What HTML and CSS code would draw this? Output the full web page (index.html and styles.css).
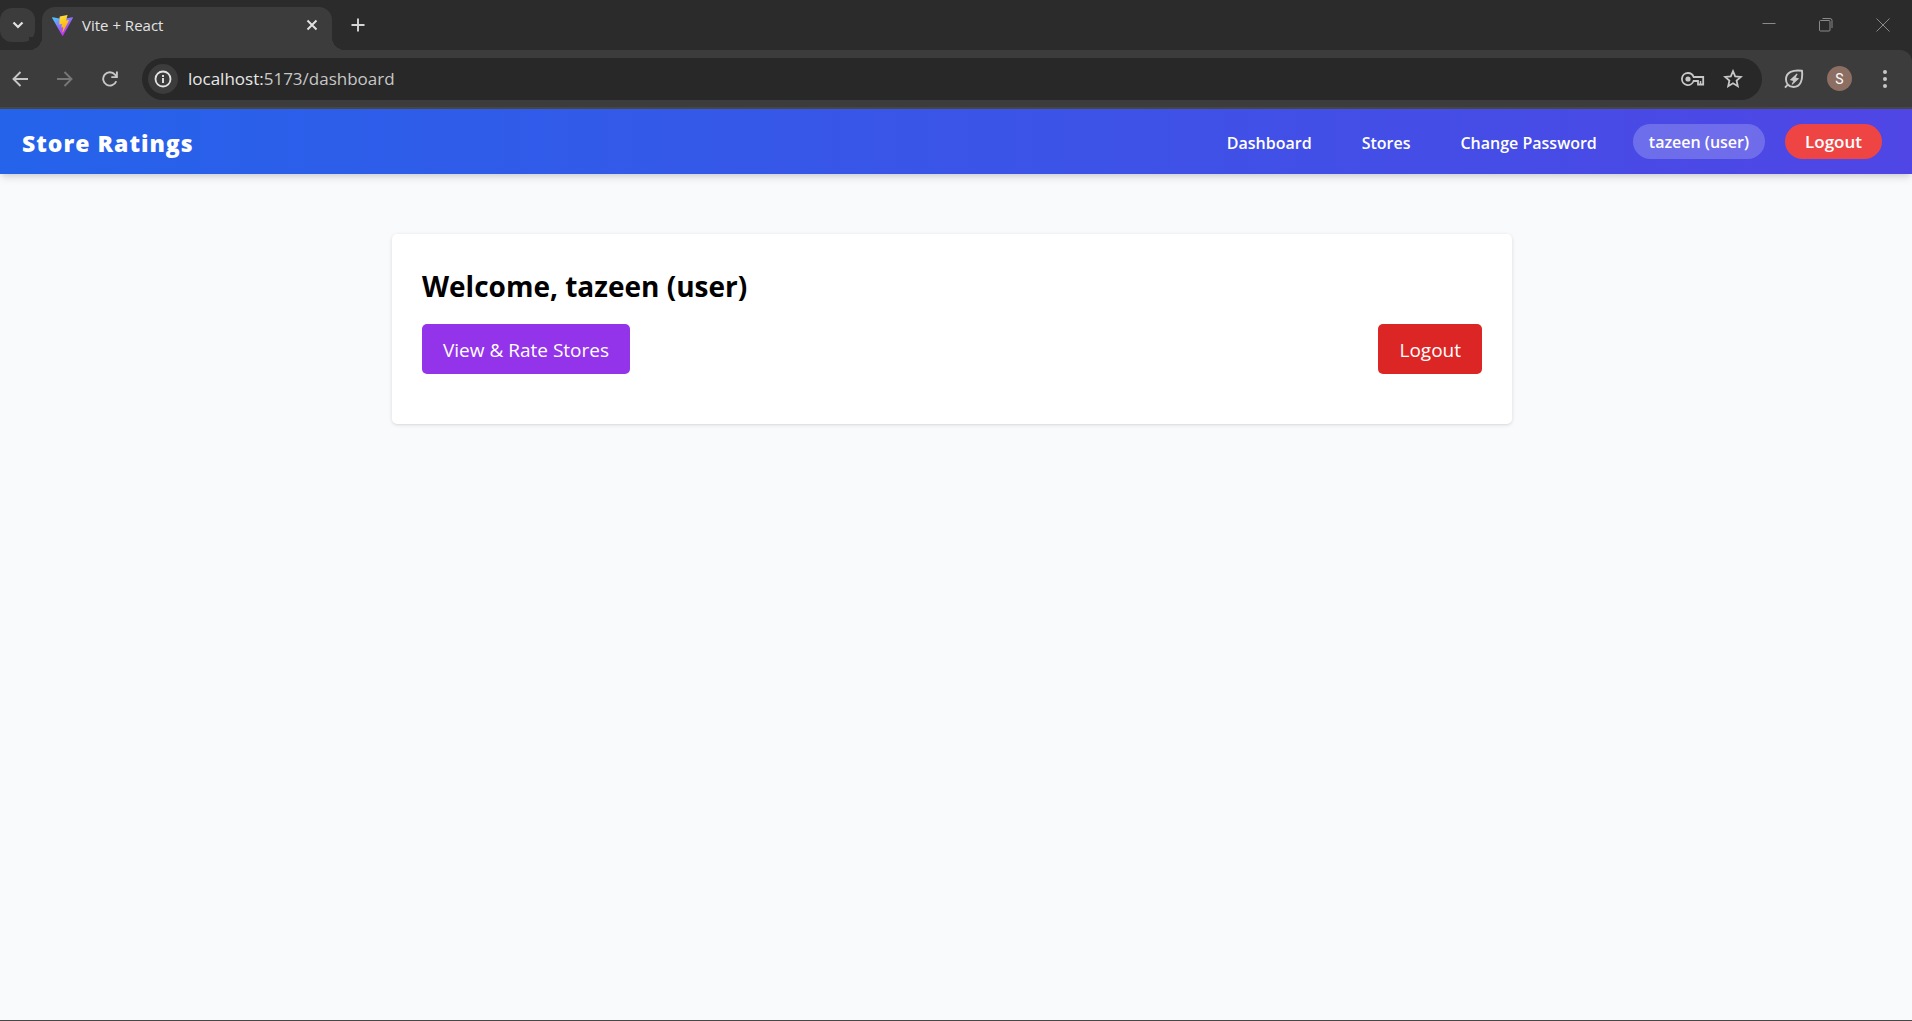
FILE: index.html
```html
<!DOCTYPE html>
<html lang="en">
<head>
<meta charset="utf-8">
<title>Vite + React</title>
<link rel="stylesheet" href="styles.css">
</head>
<body>
<header class="browser">
  <div class="tab-strip">
    <button class="tab-search" aria-label="Search tabs"><svg width="12" height="8" viewBox="0 0 12 8"><path d="M1.500 1.500 6 6l4.500-4.500" fill="none" stroke="currentColor" stroke-width="2.200"/></svg></button>
    <div class="tab">
      <svg class="favicon" width="21" height="21" viewBox="0 0 32 32">
        <defs>
          <linearGradient id="violet" x1="0" y1="0" x2="0.600" y2="0.800"><stop offset="0" stop-color="#41d1ff"/><stop offset="1" stop-color="#bd34fe"/></linearGradient>
          <linearGradient id="amber" x1="0.400" y1="0" x2="0.600" y2="0.900"><stop offset="0" stop-color="#ffea83"/><stop offset="0.080" stop-color="#ffdd35"/><stop offset="1" stop-color="#ffa800"/></linearGradient>
        </defs>
        <path fill="url(#violet)" d="M31.860 4.660 16.900 31.400c-.300.550-1.100.560-1.400 0L.250 4.660c-.340-.600.170-1.320.850-1.200l14.970 2.680h.290l14.660-2.670c.670-.120 1.190.600.840 1.190z"/>
        <path fill="url(#amber)" d="M23.180.010 12.110 2.180a.400.400 0 0 0-.330.380l-.680 11.500c-.020.270.230.480.500.420l3.080-.710c.290-.070.550.190.490.480l-.920 4.480c-.060.300.220.560.510.470l1.900-.580c.300-.090.580.180.520.480l-1.460 7.040c-.090.440.500.680.740.310l.160-.250 9.020-18c.150-.300-.110-.650-.440-.580l-3.170.610c-.300.060-.550-.220-.470-.510l2.070-7.180c.090-.290-.160-.570-.450-.530z"/>
      </svg>
      <span class="tab-title">Vite + React</span>
      <button class="plain" aria-label="Close tab"><svg width="12" height="12" viewBox="0 0 12 12"><path d="m1.500 1.500 9 9m0-9-9 9" stroke="#e3e3e3" stroke-width="1.900"/></svg></button>
    </div>
    <button class="plain new-tab" aria-label="New tab"><svg width="14" height="14" viewBox="0 0 14 14"><path d="M7 .500v13M.500 7h13" stroke="#d5d5d5" stroke-width="1.900"/></svg></button>
    <div class="window-controls">
      <button class="plain" aria-label="Minimize"><svg width="14" height="14" viewBox="0 0 14 14"><path d="M.500 5.500h13" stroke="currentColor"/></svg></button>
      <button class="plain" aria-label="Restore"><svg width="14" height="14" viewBox="0 0 14 14" fill="none" stroke="currentColor"><rect x=".500" y="2.500" width="10.500" height="10.500" rx="1"/><path d="M3.500.500H11a2 2 0 0 1 2 2V10"/></svg></button>
      <button class="plain" aria-label="Close"><svg width="14" height="14" viewBox="0 0 14 14"><path d="m.500.500 13 13m0-13-13 13" stroke="currentColor"/></svg></button>
    </div>
  </div>
  <div class="toolbar">
    <div class="history">
      <button class="plain" aria-label="Back"><svg width="16" height="16" viewBox="0 0 16 16"><path d="M8.500 1 1.500 8l7 7M2 8h14" fill="none" stroke="currentColor" stroke-width="1.900"/></svg></button>
      <button class="plain dim" aria-label="Forward"><svg width="16" height="16" viewBox="0 0 16 16"><path d="m7.500 1 7 7-7 7M14 8H0" fill="none" stroke="currentColor" stroke-width="1.900"/></svg></button>
      <button class="plain" aria-label="Reload"><svg width="16" height="16" viewBox="0 0 16 16"><path d="M14.200 10.200A6.700 6.700 0 1 1 13 3.600L14.800 5.600M14.900.500v5.600H9.300" fill="none" stroke="currentColor" stroke-width="1.900"/></svg></button>
    </div>
    <div class="address-bar">
      <button class="site-info" aria-label="View site information"><svg width="18" height="18" viewBox="0 0 18 18"><circle cx="9" cy="9" r="7.500" fill="none" stroke="currentColor" stroke-width="1.800"/><path d="M9 8v5M9 5v1.900" stroke="currentColor" stroke-width="1.900"/></svg></button>
      <div class="url" role="textbox" aria-label="Address"><span class="host">localhost:</span>5173/dashboard</div>
      <button class="plain" aria-label="Passwords"><svg width="24" height="14" viewBox="0 0 24 14"><path d="M7 1a6 6 0 1 0 5.600 8H17v3.500h5.200V5H12.600A6 6 0 0 0 7 1z" fill="none" stroke="currentColor" stroke-width="1.800"/><circle cx="7" cy="7" r="2.600" fill="currentColor"/><path d="M19.500 9v3" stroke="currentColor" stroke-width="1.500"/></svg></button>
      <button class="plain star" aria-label="Bookmark this tab"><svg width="20" height="20" viewBox="0 0 20 20"><path d="m10 2.200 2.200 5.200 5.600.500-4.200 3.700 1.200 5.600-4.800-2.900-4.800 2.900 1.200-5.600-4.200-3.700 5.600-.500z" fill="none" stroke="currentColor" stroke-width="1.800"/></svg></button>
    </div>
    <div class="tools">
      <button class="plain" aria-label="Energy saver"><svg width="20" height="20" viewBox="0 0 20 20" fill="none" stroke="currentColor" stroke-width="1.900"><path d="M18 1.800C9 .600 2 3.200 2 10.500c0 1.900.600 3.600 1.700 5C5.200 17.200 7.300 18 9.500 18c7 0 9.500-7 8.500-16.200zM4 15.300l-3 3.400"/><path fill="currentColor" stroke="none" d="m12.800 4.600-7 6.400 3.500.900-1.700 3.400.700.500 6.900-6.300-3.500-.900 1.900-3.400z"/></svg></button>
      <button class="avatar" aria-label="Profile">S</button>
      <button class="plain" aria-label="Menu"><svg width="6" height="20" viewBox="0 0 6 20" fill="currentColor"><circle cx="3" cy="3" r="2"/><circle cx="3" cy="10" r="2"/><circle cx="3" cy="17" r="2"/></svg></button>
    </div>
  </div>
</header>
<div class="page">
  <nav class="navbar">
    <a class="brand" href="#">Store Ratings</a>
    <div class="nav-links">
      <a href="#">Dashboard</a>
      <a href="#">Stores</a>
      <a href="#">Change Password</a>
    </div>
    <span class="user-pill">tazeen (user)</span>
    <button class="nav-logout">Logout</button>
  </nav>
  <main class="content">
    <section class="card">
      <h1>Welcome, tazeen (user)</h1>
      <div class="actions">
        <button class="btn btn-purple">View &amp; Rate Stores</button>
        <button class="btn btn-red">Logout</button>
      </div>
    </section>
  </main>
</div>
</body>
</html>
```
FILE: styles.css
```css
* { box-sizing: border-box; }
body {
  margin: 0;
  min-height: 100vh;
  display: flex;
  flex-direction: column;
  font-family: "Open Sans", "Noto Sans", sans-serif;
  background: #f9fafb;
}
button { font: inherit; border: 0; padding: 0; cursor: pointer; }
a { color: inherit; text-decoration: none; }
svg { display: block; flex: none; }

/* Browser frame */
.browser { background: #2b2b2b; color: #c7c7c7; }
.plain { background: none; color: inherit; }
.tab-strip { display: flex; height: 50px; }
.tab-search {
  display: grid;
  place-items: center;
  width: 35px;
  height: 34px;
  margin-top: 8px;
  border-radius: 12px;
  background: #3c3c3c;
  color: #e3e3e3;
}
.tab {
  position: relative;
  display: flex;
  align-items: center;
  width: 290px;
  height: 43px;
  margin: 7px 0 0 7px;
  padding: 0 14px 7px 10px;
  border-radius: 13px 13px 0 0;
  background: #3c3c3c;
}
.tab::before, .tab::after {
  content: "";
  position: absolute;
  bottom: 0;
  width: 13px;
  height: 13px;
}
.tab::before { right: 100%; background: radial-gradient(circle at 0 0, #2b2b2b 13px, #3c3c3c 13px); }
.tab::after { left: 100%; background: radial-gradient(circle at 100% 0, #2b2b2b 13px, #3c3c3c 13px); }
.tab-title { flex: 1; margin-left: 9px; font-size: 15px; line-height: 20px; color: #e3e3e3; }
.new-tab { margin-left: 19px; }
.window-controls { display: flex; gap: 43px; margin-left: auto; padding-right: 22px; color: #8a8a8a; }
.toolbar {
  display: flex;
  align-items: center;
  height: 59px;
  border-bottom: 2px solid #474747;
  border-radius: 0 12px 0 0;
  background: #3c3c3c;
}
.history { display: flex; gap: 29px; padding-left: 12px; }
.dim { color: #777777; }
.address-bar {
  flex: 1;
  display: flex;
  align-items: center;
  height: 42px;
  margin-left: 24px;
  padding: 0 19px 0 6px;
  border-radius: 21px;
  background: #282828;
}
.site-info {
  display: grid;
  place-items: center;
  width: 30px;
  height: 30px;
  border-radius: 50%;
  background: #3c3c3c;
  color: #e3e3e3;
}
.url { flex: 1; margin-left: 10px; font-size: 17px; line-height: 24px; }
.host { color: #e8e8e8; }
.star { margin-left: 18px; }
.tools { display: flex; align-items: center; padding: 0 24px 0 22px; }
.avatar {
  width: 25px;
  height: 25px;
  margin: 0 30px 0 23px;
  border-radius: 50%;
  background: #8d6e63;
  color: #ffffff;
  font-family: Roboto, sans-serif;
  font-size: 14px;
}

/* Application */
.page { flex: 1; border-bottom: 1px solid #474747; }
.navbar {
  display: flex;
  align-items: center;
  height: 65px;
  padding: 0 30px 0 22px;
  background: linear-gradient(90deg, #2563eb, #4f46e5);
  box-shadow: 0 5px 8px -1px rgba(0, 0, 0, 0.1), 0 3px 5px -2px rgba(0, 0, 0, 0.1);
  color: #ffffff;
  font-size: 16px;
  font-weight: 600;
  line-height: 24px;
}
.brand { padding-top: 2px; font-size: 23px; font-weight: 800; line-height: 32px; letter-spacing: 1px; }
.nav-links { display: flex; gap: 50px; margin-left: auto; padding-top: 2px; }
.user-pill, .nav-logout { height: 35px; border-radius: 18px; line-height: 36px; }
.user-pill { margin: 0 20px 0 36px; padding: 0 16px; background: rgba(255, 255, 255, 0.2); }
.nav-logout { padding: 0 20px; background: #ef4444; color: #ffffff; font-size: 17px; }
.content { padding: 60px 8px 60px 0; }
.card {
  max-width: 1120px;
  margin: 0 auto;
  padding: 32px 30px 50px;
  border-radius: 5px;
  background: #ffffff;
  box-shadow: 0 1px 4px rgba(0, 0, 0, 0.1), 0 1px 3px -1px rgba(0, 0, 0, 0.1);
}
h1 { margin: 0 0 18px; font-size: 28px; font-weight: 700; line-height: 40px; }
.actions { display: flex; justify-content: space-between; }
.btn { height: 50px; padding: 2px 21px 0; border-radius: 5px; color: #ffffff; font-size: 19px; line-height: 30px; }
.btn-purple { background: #9333ea; }
.btn-red { background: #dc2626; }
```
